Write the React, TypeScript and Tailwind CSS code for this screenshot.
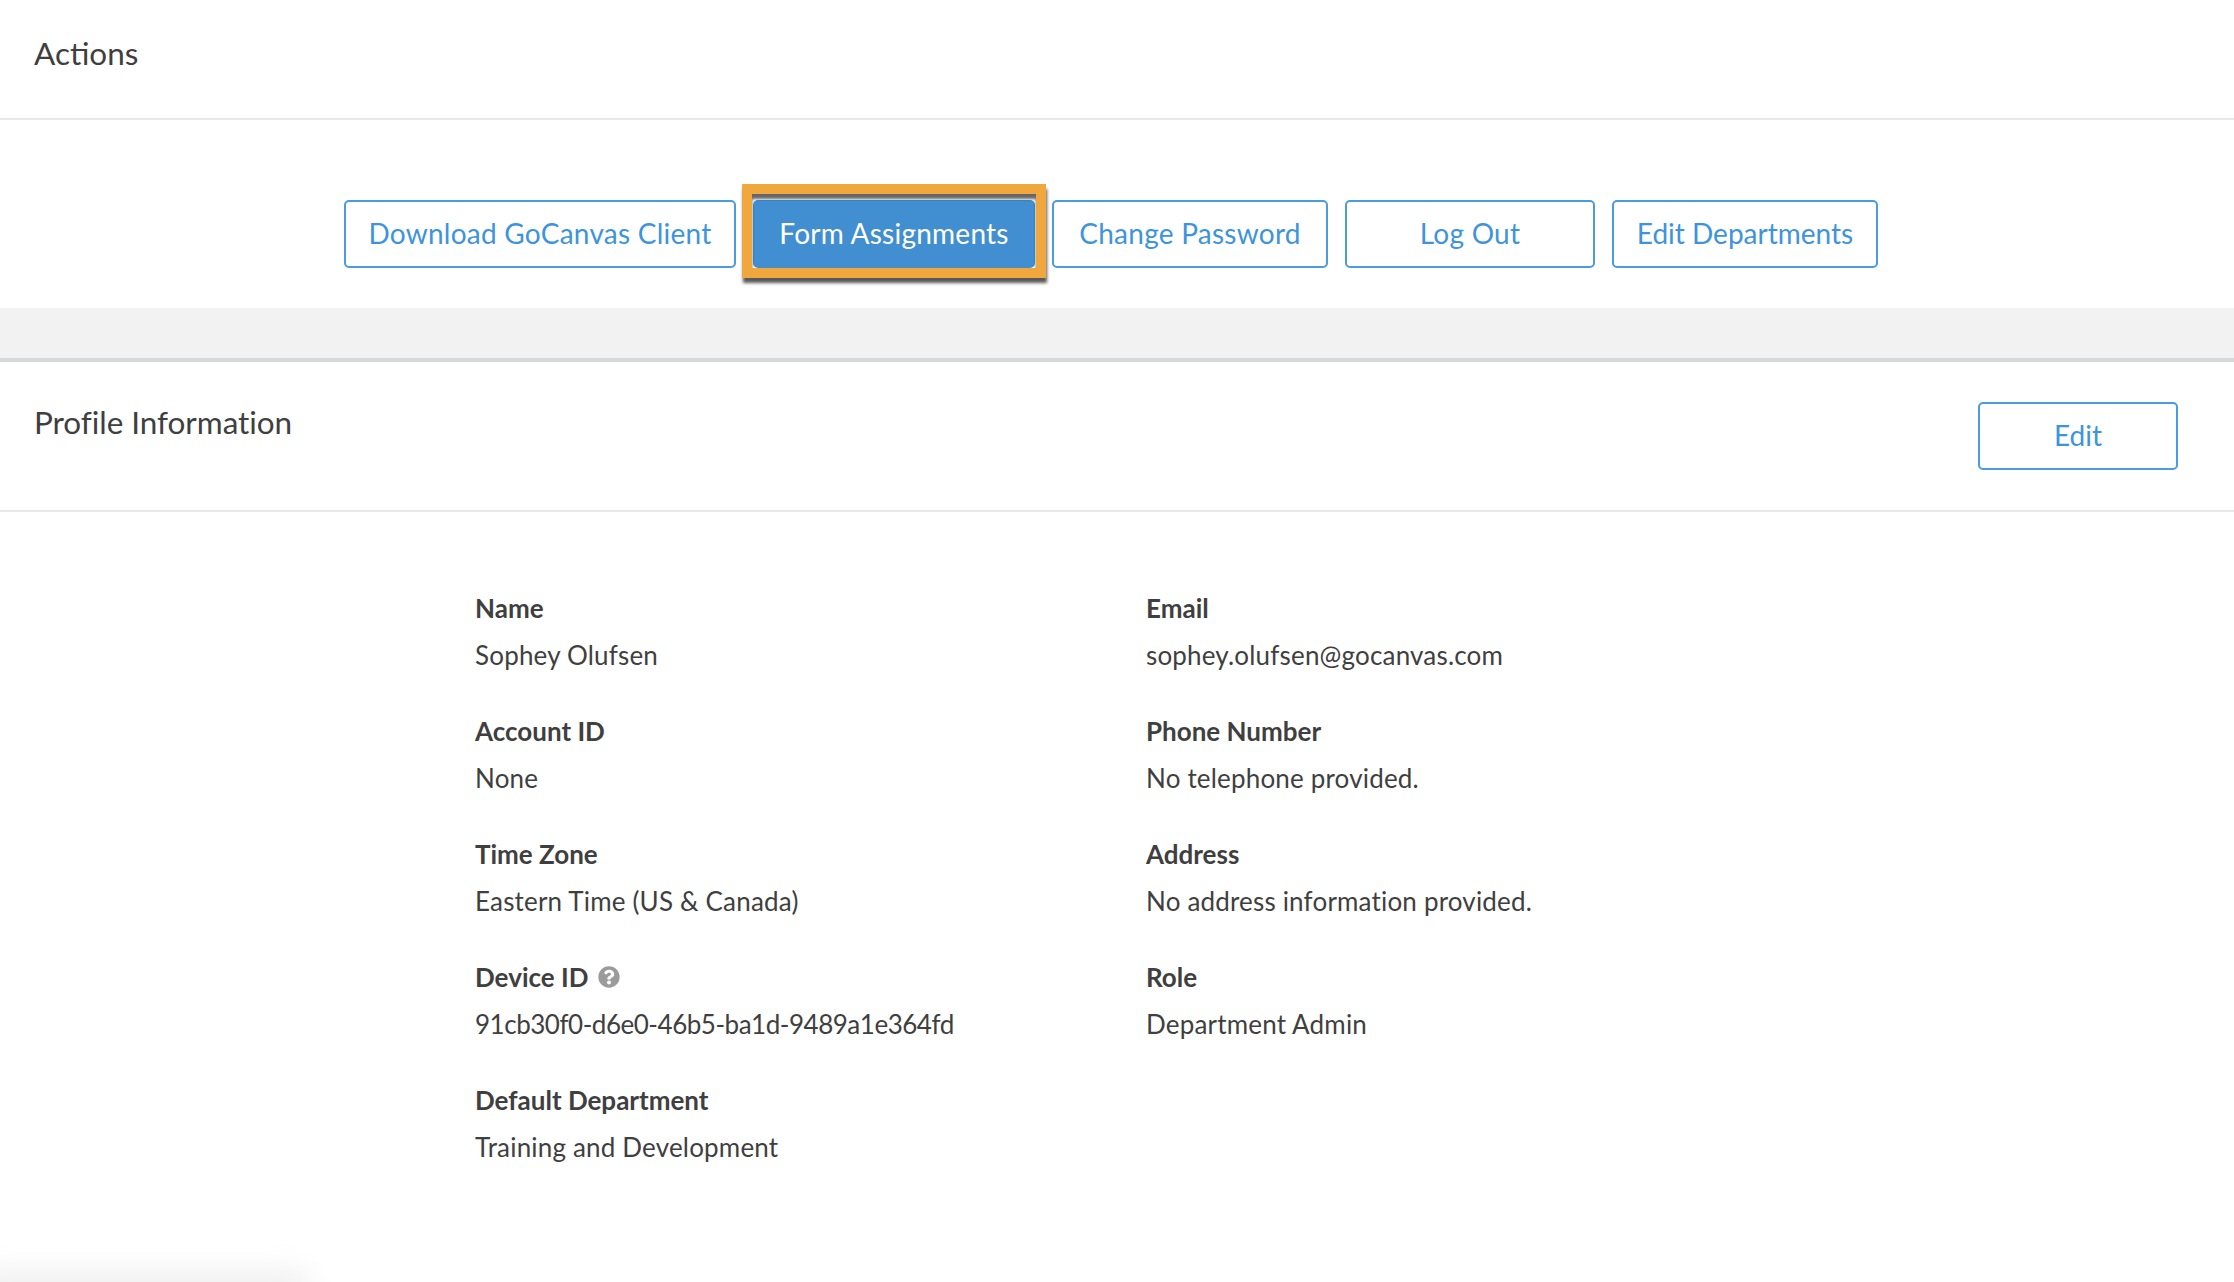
import { FaQuestionCircle } from "react-icons/fa";

const rows: [string, string, string | null, string | null][] = [
  ["Name", "Sophey Olufsen", "Email", "sophey.olufsen@gocanvas.com"],
  ["Account ID", "None", "Phone Number", "No telephone provided."],
  ["Time Zone", "Eastern Time (US & Canada)", "Address", "No address information provided."],
  ["Device ID", "91cb30f0-d6e0-46b5-ba1d-9489a1e364fd", "Role", "Department Admin"],
  ["Default Department", "Training and Development", null, null],
];

function Field({ label, value }: { label: string; value: string }) {
  const isDevice = label === "Device ID";
  return (
    <div className="h-[123px]">
      <div className="flex h-[47px] items-center gap-[10px] text-[26px] leading-[34px] font-bold tracking-[0px] text-[#3f3f3f]">
        <span>{label}</span>
        {isDevice && <FaQuestionCircle className="h-[22px] w-[22px] text-[#9b9b9b]" />}
      </div>
      <div className={`pt-px text-[26px] leading-[47px] text-[#3f3f3f] ${isDevice ? "tracking-[-0.48px]" : "tracking-[0.18px]"}`}>{value}</div>
    </div>
  );
}

function OutlineButton({ label, width, tracking = "tracking-[0.25px]" }: { label: string; width: string; tracking?: string }) {
  return (
    <button className={`h-[68px] rounded-[5px] border-2 border-[#4a9be0] bg-white pb-[3px] text-center text-[28px] text-[#3e94dc] ${tracking} ${width}`}>
      {label}
    </button>
  );
}

export default function App() {
  return (
    <div className="relative h-[1282px] w-full overflow-hidden bg-white font-['Lato','Liberation_Sans',sans-serif]">
      <div className="flex h-[120px] items-center border-b-2 border-[#e6e8ea] pb-[10px] pl-[34px] text-[31.5px] text-[#3f3f3f]">Actions</div>
      <div className="flex h-[188px] pt-[80px] pl-[344px]">
        <OutlineButton label="Download GoCanvas Client" width="w-[392px]" />
        <button className="relative mx-[17px] h-[68px] w-[282px] rounded-[5px] bg-[#418fd1] pb-[3px] text-[28px] tracking-[0.25px] text-white">
          Form Assignments
          <span className="absolute -top-[16px] -right-[11px] -bottom-[10px] -left-[11px] border-10 border-[#f0a73e] shadow-[1px_5px_3px_rgba(0,0,0,0.65),inset_0_5px_3px_rgba(0,0,0,0.6)]" />
        </button>
        <OutlineButton label="Change Password" width="w-[276px]" />
        <div className="w-[17px]" />
        <OutlineButton label="Log Out" width="w-[250px]" />
        <div className="w-[17px]" />
        <OutlineButton label="Edit Departments" width="w-[266px]" tracking="tracking-[0px]" />
      </div>
      <div className="h-[54px] border-b-4 border-[#d5d9dc] bg-[#f2f2f2]" />
      <div className="flex h-[150px] items-start justify-between border-b-2 border-[#e6e8ea] pr-[56px] pl-[34px]">
        <div className="mt-[38px] text-[31.5px] leading-[44px] tracking-[-0.05px] text-[#3f3f3f]">Profile Information</div>
        <button className="mt-[40px] h-[68px] w-[200px] rounded-[5px] border-2 border-[#4a9be0] pb-[3px] text-[28px] text-[#3e94dc]">Edit</button>
      </div>
      <div className="grid grid-cols-[671px_671px] pt-[72px] pl-[475px]">
        {rows.map(([a, b, c, d]) => (
          <div key={a} className="contents">
            <Field label={a} value={b} />
            {c && d ? <Field label={c} value={d} /> : <div />}
          </div>
        ))}
      </div>
      <div className="absolute -bottom-[20px] -left-[30px] h-[30px] w-[340px] rounded-full bg-[#eeeeee] blur-[14px]" />
    </div>
  );
}
